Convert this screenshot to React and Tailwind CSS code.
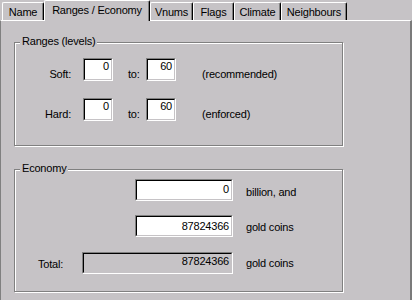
import React from "react";

const font = { fontFamily: '"Liberation Sans", Arial, sans-serif' };

/* 클래식 윈도우 탭 */
function Tab({ label, width, selected }) {
  if (selected) {
    return (
      <div
        className={`relative z-10 -mb-px h-[21px] ${width} rounded-t-[2px] border-l border-t border-r border-l-white border-t-white border-r-black bg-[#c6c3c6] pt-[3px] text-center shadow-[inset_-1px_0_0_#808080]`}>
        {label}
      </div>
    );
  }
  return (
    <div
      className={`h-[18px] ${width} rounded-t-[2px] border-l border-t border-r border-l-white border-t-white border-r-black pt-[3px] text-center shadow-[inset_-1px_0_0_#808080]`}>
      {label}
    </div>
  );
}

/* 움푹 들어간 입력칸 */
function Field({ value, width, height = "h-[23px]", pt = "pt-0", readOnly }) {
  return (
    <div
      className={`${width} ${height} shrink-0 border border-t-[#808080] border-l-[#808080] border-b-white border-r-white`}>
      <div
        className={`h-full border border-t-black border-l-black border-b-[#c6c3c6] border-r-[#c6c3c6] ${
          readOnly ? "bg-[#c6c3c6]" : "bg-white"
        } ${pt} pr-[2px] text-right text-black`}>
        {value}
      </div>
    </div>
  );
}

function GroupBox({ title, height, children }) {
  return (
    <div
      className={`relative ml-[13px] w-[329px] ${height} border border-[#808080] shadow-[inset_1px_1px_0_#fff,1px_1px_0_#fff]`}>
      <span className="absolute -top-[8px] left-[5px] bg-[#c6c3c6] px-[2px]">
        {title}
      </span>
      {children}
    </div>
  );
}

export default function App() {
  const tabs = [
    { label: "Name", width: "w-[42px]" },
    { label: "Ranges / Economy", width: "w-[106px]", selected: true },
    { label: "Vnums", width: "w-[43px]" },
    { label: "Flags", width: "w-[41px]" },
    { label: "Climate", width: "w-[47px]" },
    { label: "Neighbours", width: "w-[66px]" },
  ];

  return (
    <div
      className="h-[300px] w-[412px] overflow-hidden bg-[#c6c3c6] text-[11px] leading-[13px] tracking-[-0.2px] text-black"
      style={font}>
      {/* 탭 */}
      <div className="flex h-[20px] items-end pl-[2px]">
        {tabs.map((t) => (
          <Tab key={t.label} {...t} />
        ))}
      </div>

      {/* 패널 */}
      <div className="h-[280px] w-[412px] border-l border-t border-r-2 border-l-[#808080] border-t-white border-r-[#7b7b7b] pt-[21px]">
        <GroupBox title="Ranges (levels)" height="h-[104px]">
          <div className="pt-[15px]">
            <div className="flex items-start">
              <span className="mt-[10px] w-[56px] text-right">Soft:</span>
              <div className="ml-[12px]">
                <Field value="0" width="w-[30px]" />
              </div>
              <span className="ml-[15px] mt-[10px] w-[18px]">to:</span>
              <Field value="60" width="w-[30px]" />
              <span className="ml-[26px] mt-[10px]">(recommended)</span>
            </div>
            <div className="mt-[17px] flex items-start">
              <span className="mt-[10px] w-[56px] text-right">Hard:</span>
              <div className="ml-[12px]">
                <Field value="0" width="w-[30px]" />
              </div>
              <span className="ml-[15px] mt-[10px] w-[18px]">to:</span>
              <Field value="60" width="w-[30px]" />
              <span className="ml-[26px] mt-[10px]">(enforced)</span>
            </div>
          </div>
        </GroupBox>

        <div className="mt-[23px]">
          <GroupBox title="Economy" height="h-[123px]">
            <div className="pt-[9px]">
              <div className="flex items-start pl-[120px]">
                <Field value="0" width="w-[98px]" height="h-[22px]" pt="pt-[2px]" />
                <span className="ml-[13px] mt-[7px]">billion, and</span>
              </div>
              <div className="mt-[14px] flex items-start pl-[120px]">
                <Field value="87824366" width="w-[98px]" height="h-[22px]" pt="pt-[3px]" />
                <span className="ml-[13px] mt-[6px]">gold coins</span>
              </div>
              <div className="mt-[15px] flex items-start">
                <span className="mt-[6px] w-[67px] pl-[23px]">Total:</span>
                <Field
                  value="87824366"
                  width="w-[151px]"
                  height="h-[22px]"
                  pt="pt-[1px]"
                  readOnly
                />
                <span className="ml-[13px] mt-[5px]">gold coins</span>
              </div>
            </div>
          </GroupBox>
        </div>
      </div>
    </div>
  );
}
